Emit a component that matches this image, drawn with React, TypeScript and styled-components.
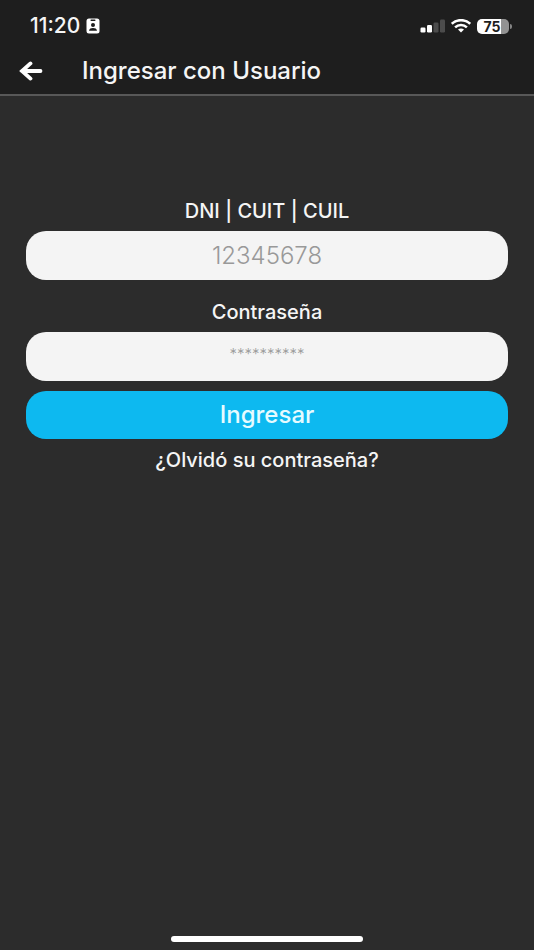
import React from "react";
import styled, { createGlobalStyle } from "styled-components";

const GlobalStyle = createGlobalStyle`
  * { box-sizing: border-box; }
  body {
    margin: 0;
    background: #2c2c2c;
    color: #f5f5f5;
    font-family: Inter, "Open Sans", sans-serif;
  }
`;

const Screen = styled.div`
  display: flex;
  flex-direction: column;
  min-height: 100vh;
`;

const TopArea = styled.header`
  background: #1e1e1e;
  border-bottom: 2px solid #585858;
`;

const StatusBar = styled.div`
  display: flex;
  align-items: center;
  justify-content: space-between;
  height: 48px;
  padding: 4px 22px 0 30px;
`;

const StatusGroup = styled.div`
  display: flex;
  align-items: center;
  gap: 6px;
`;

const Clock = styled.time`
  font-size: 21px;
  line-height: 24px;
  font-weight: 500;
`;

const NavBar = styled.nav`
  display: flex;
  align-items: center;
  gap: 38px;
  height: 46px;
  padding: 0 18px;
`;

const BackButton = styled.button`
  display: flex;
  padding: 0;
  border: 0;
  background: none;
  color: #ffffff;
  cursor: pointer;
`;

const Title = styled.h1`
  margin: 0;
  font-size: 24px;
  line-height: 28px;
  font-weight: 500;
`;

const Form = styled.form`
  display: flex;
  flex: 1;
  flex-direction: column;
  padding: 102px 26px 0;
`;

const Field = styled.div`
  display: flex;
  flex-direction: column;
  gap: 7px;
  margin-bottom: 19px;

  & + & {
    margin-bottom: 10px;
  }
`;

const Label = styled.label`
  align-self: center;
  font-size: 20px;
  line-height: 26px;
  font-weight: 500;
`;

const TextInput = styled.input<{ $hint: number; $lift: number }>`
  width: 100%;
  height: 49px;
  padding: 0 20px ${({ $lift }) => $lift}px;
  border: 0;
  border-radius: 20px;
  background: #f4f4f4;
  color: #2c2c2c;
  font-family: inherit;
  font-size: 24px;
  font-weight: 300;
  text-align: center;

  &::placeholder {
    color: #999999;
    font-size: ${({ $hint }) => $hint}px;
    opacity: 1;
  }
`;

const SubmitButton = styled.button`
  height: 48px;
  border: 0;
  border-radius: 20px;
  background: #0db9f0;
  color: #e6fbff;
  font-family: inherit;
  font-size: 24px;
  line-height: 28px;
  font-weight: 500;
  cursor: pointer;
`;

const ForgotLink = styled.a`
  align-self: center;
  margin-top: 8px;
  color: inherit;
  font-size: 20px;
  line-height: 26px;
  font-weight: 500;
  text-decoration: none;
`;

const HomeArea = styled.footer`
  display: flex;
  justify-content: center;
  padding-bottom: 8px;
`;

const HomeIndicator = styled.div`
  width: 36%;
  height: 6px;
  border-radius: 3px;
  background: #ffffff;
`;

const Battery = styled.div`
  display: flex;
  align-items: center;
  gap: 1px;
`;

const BatteryBody = styled.div`
  width: 32px;
  height: 15px;
  padding-right: 2px;
  border-radius: 5px;
  background: linear-gradient(to right, #ffffff 75%, #929292 75%);
  color: #1e1e1e;
  font-size: 14px;
  line-height: 15px;
  font-weight: 700;
  text-align: center;
`;

const BatteryTip = styled.div`
  width: 2px;
  height: 5px;
  border-radius: 0 2px 2px 0;
  background: #858585;
`;

const BadgeIcon = () => (
  <svg width="14" height="16" viewBox="0 0 14 16" aria-hidden="true">
    <rect x="0.5" y="0.5" width="13" height="15" rx="2.5" fill="#fff" />
    <rect x="4.5" y="1.6" width="5" height="1.3" rx="0.6" fill="#1e1e1e" />
    <circle cx="7" cy="7" r="2" fill="#1e1e1e" />
    <path d="M3 12.8C3.2 10.7 4.9 10 7 10s3.8.7 4 2.8Z" fill="#1e1e1e" />
  </svg>
);

const SignalIcon = () => (
  <svg width="25" height="14" viewBox="0 0 25 14" aria-hidden="true">
    <rect x="0.5" y="8.5" width="5" height="5" rx="1.2" fill="#fff" />
    <rect x="7" y="6" width="5" height="7.5" rx="1.2" fill="#fff" />
    <rect x="13.5" y="3.5" width="5" height="10" rx="1.2" fill="#4c4c4c" />
    <rect x="20" y="0.5" width="5" height="13" rx="1.2" fill="#4c4c4c" />
  </svg>
);

const WifiIcon = () => (
  <svg width="20" height="14" viewBox="0 0 20 14" aria-hidden="true">
    <g fill="none" stroke="#fff" strokeWidth="2.5">
      <path d="M.8 4.8C6-.1 14-.1 19.2 4.8" />
      <path d="M4.1 8.4c3.3-3.2 8.5-3.2 11.8 0" />
    </g>
    <path d="M7 10.6c1.7-1.5 4.3-1.5 6 0L10 13.6Z" fill="#fff" />
  </svg>
);

const ArrowIcon = () => (
  <svg width="26" height="20" viewBox="0 0 26 20" aria-hidden="true">
    <path
      d="M12.5 2.4 4 10l8.5 7.6M4 10h18.5"
      fill="none"
      stroke="currentColor"
      strokeWidth="3.8"
      strokeLinecap="round"
      strokeLinejoin="miter"
    />
  </svg>
);

export default function App() {
  return (
    <Screen>
      <GlobalStyle />
      <TopArea>
        <StatusBar>
          <StatusGroup>
            <Clock>11:20</Clock>
            <BadgeIcon />
          </StatusGroup>
          <StatusGroup>
            <SignalIcon />
            <WifiIcon />
            <Battery>
              <BatteryBody>75</BatteryBody>
              <BatteryTip />
            </Battery>
          </StatusGroup>
        </StatusBar>
        <NavBar>
          <BackButton type="button" aria-label="Volver">
            <ArrowIcon />
          </BackButton>
          <Title>Ingresar con Usuario</Title>
        </NavBar>
      </TopArea>
      <Form onSubmit={(event) => event.preventDefault()}>
        <Field>
          <Label htmlFor="document">DNI | CUIT | CUIL</Label>
          <TextInput
            id="document"
            type="text"
            inputMode="numeric"
            placeholder="12345678"
            $hint={24}
            $lift={0}
          />
        </Field>
        <Field>
          <Label htmlFor="password">Contraseña</Label>
          <TextInput id="password" type="password" placeholder="**********" $hint={15} $lift={12} />
        </Field>
        <SubmitButton type="submit">Ingresar</SubmitButton>
        <ForgotLink href="#recuperar">¿Olvidó su contraseña?</ForgotLink>
      </Form>
      <HomeArea>
        <HomeIndicator />
      </HomeArea>
    </Screen>
  );
}
